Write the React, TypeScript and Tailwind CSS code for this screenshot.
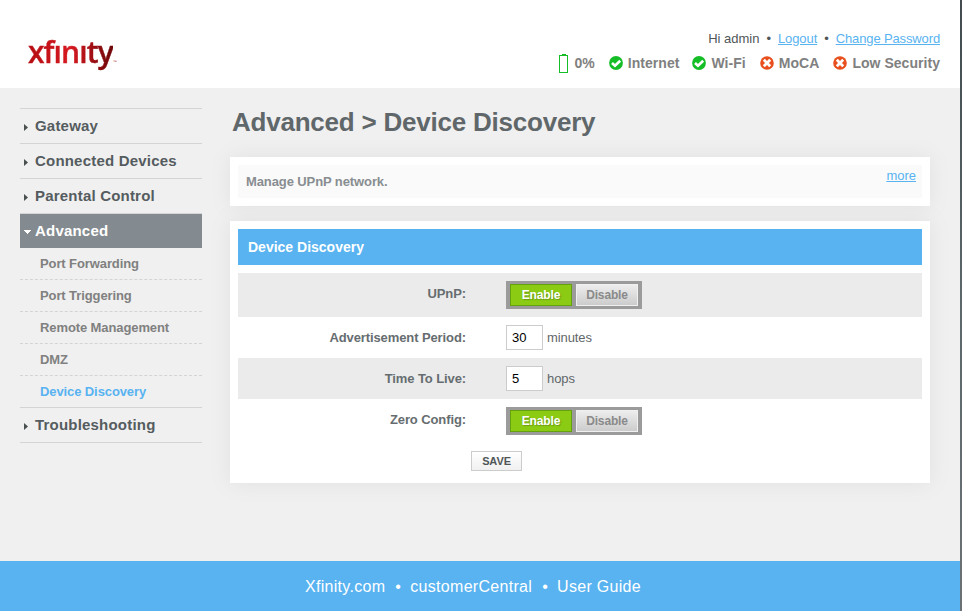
import React from "react";

const sans = "font-['Liberation_Sans',Arial,sans-serif]";

const subItems = [
  { label: "Port Forwarding", cls: "border-dashed text-[#808080]" },
  { label: "Port Triggering", cls: "border-dashed text-[#808080]" },
  { label: "Remote Management", cls: "border-dashed text-[#808080]" },
  { label: "DMZ", cls: "border-dashed text-[#808080]" },
  { label: "Device Discovery", cls: "border-solid text-[#58b3f0]" },
];

function Arrow() {
  return (
    <svg width="4" height="7" viewBox="0 0 4 7" className="mt-[2px] ml-1 shrink-0">
      <path d="M0 0L4 3.5L0 7Z" fill="#4a4f50" />
    </svg>
  );
}

function NavItem({ label }: { label: string }) {
  return (
    <div className="flex h-[35px] items-center border-b border-[#d4d4d4]">
      <Arrow />
      <span className="ml-[7px] text-[15px] leading-[34px] font-bold tracking-[0.2px] text-[#555c5f]">{label}</span>
    </div>
  );
}

function Good() {
  return (
    <svg width="14" height="14" viewBox="0 0 14 14">
      <circle cx="7" cy="7" r="6.9" fill="#15bd27" />
      <path d="M3 7L6 9.8L11.2 4.8" fill="none" stroke="#fff" strokeWidth="2.6" />
    </svg>
  );
}

function Bad() {
  return (
    <svg width="14" height="14" viewBox="0 0 14 14">
      <circle cx="7" cy="7" r="6.8" fill="#e94f1d" />
      <path d="M3.8 3.8L10.2 10.2M10.2 3.8L3.8 10.2" fill="none" stroke="#fff" strokeWidth="2.8" />
    </svg>
  );
}

function Toggle() {
  return (
    <div className="flex h-7 w-[136px] gap-1 bg-[#9b9b9b] p-[3px] pl-1 text-[12px] leading-[20px] font-bold tracking-[-0.15px]">
      <button className="h-[22px] w-[62px] border border-[#66a10f] bg-[#8bcb13] text-white [text-shadow:1px_1px_1px_#6a9a18]">Enable</button>
      <button className="h-[22px] w-[62px] border border-[#f0f0f0] bg-linear-to-b from-[#ededed] to-[#cccccc] text-[#8a8a8a]">Disable</button>
    </div>
  );
}

function Row({ label, cls, children }: { label: string; cls: string; children: React.ReactNode }) {
  return (
    <div className={"flex pt-2 " + cls}>
      <div className="w-[228px] pt-[5px] text-right text-[13px] leading-4 font-bold tracking-[-0.1px] text-[#666d70]">{label}</div>
      <div className="ml-10 flex text-[13px] text-[#5f676a]">{children}</div>
    </div>
  );
}

export default function App() {
  return (
    <div className={"flex h-[611px] w-[962px] overflow-hidden bg-[#f0f0f0] " + sans}>
      <div className="flex w-[960px] flex-col">
        <header className="flex h-[88px] shrink-0 justify-between bg-white">
          <div aria-label="xfinity" className="mt-8 ml-7 flex h-10 items-start">
            <span className="bg-linear-to-r from-[#b50d12] via-[#d71920] to-[#6d0608] bg-clip-text font-['Open_Sans',sans-serif] text-[30px] leading-[40px] font-semibold tracking-[-0.9px] text-transparent [-webkit-text-stroke:0.4px_transparent]">xfınıty</span>
            <span className="mt-[27px] text-[4px] leading-[6px] text-[#a33]">™</span>
          </div>
          <div className="mr-5 flex flex-col items-end">
            <div className="mt-[31px] flex text-[13px] leading-4 text-[#505658]">
              <span>Hi admin</span>
              <span className="mx-[7px]">•</span>
              <a className="tracking-[-0.1px] text-[#58b3f0] underline">Logout</a>
              <span className="mx-[7px]">•</span>
              <a className="tracking-[-0.13px] text-[#58b3f0] underline">Change Password</a>
            </div>
            <div className="mt-[6px] flex h-5 items-center text-[14px] leading-5 font-bold tracking-[0.04px] text-[#808080]">
              <svg width="10" height="20" viewBox="0 0 10 20" shapeRendering="crispEdges">
                <path d="M3 1h4v2H3Z" fill="#15bd27" />
                <rect x="0.5" y="2.5" width="8" height="17" rx="1" fill="none" stroke="#15bd27" />
              </svg>
              <span className="mr-[14px] ml-[5px]">0%</span>
              <Good />
              <span className="mr-[13px] ml-[5px]">Internet</span>
              <Good />
              <span className="mr-[14px] ml-[5px]">Wi-Fi</span>
              <Bad />
              <span className="mr-[14px] ml-[5px]">MoCA</span>
              <Bad />
              <span className="ml-[5px]">Low Security</span>
            </div>
          </div>
        </header>
        <div className="flex h-[473px] shrink-0">
          <nav className="mt-5 ml-5 w-[182px] shrink-0">
            <div className="border-t border-[#d4d4d4]">
              <NavItem label="Gateway" />
              <NavItem label="Connected Devices" />
              <NavItem label="Parental Control" />
            </div>
            <div className="flex h-[34px] items-center bg-[#848b90]">
              <svg width="7" height="4" viewBox="0 0 7 4" className="mt-[2px] ml-1" shapeRendering="crispEdges">
                <path d="M0 0H7L3.5 4Z" fill="#fff" />
              </svg>
              <span className="ml-1 text-[15px] leading-[34px] font-bold tracking-[0.2px] text-white">Advanced</span>
            </div>
            {subItems.map((s) => (
              <div key={s.label} className={"h-8 border-b border-b-[#d4d4d4] pl-5 text-[13px] leading-[31px] font-bold tracking-[-0.1px] " + s.cls}>
                {s.label}
              </div>
            ))}
            <NavItem label="Troubleshooting" />
          </nav>
          <main className="ml-7 w-[700px] shrink-0">
            <h1 className="mt-[17px] ml-[2px] h-[52px] text-[26px] leading-[34px] font-bold tracking-[-0.22px] whitespace-nowrap text-[#5f676a]">Advanced &gt; Device Discovery</h1>
            <section className="h-[49px] bg-white p-2 shadow-[0_0_20px_#e0e0e0]">
              <div className="flex h-[33px] justify-between bg-[#fafafa] pr-[6px] pl-2 text-[13px]">
                <p className="leading-[33px] font-bold tracking-[-0.1px] text-[#888d91]">Manage UPnP network.</p>
                <a className="leading-[22px] text-[#58b3f0] underline">more</a>
              </div>
            </section>
            <section className="mt-[15px] h-[262px] bg-white p-2 shadow-[0_0_20px_#e0e0e0]">
              <h2 className="mb-2 h-9 bg-[#58b3f0] pl-[10px] text-[14px] leading-9 font-bold text-white">Device Discovery</h2>
              <Row label="UPnP:" cls="h-11 bg-[#ebebeb]"><Toggle /></Row>
              <Row label="Advertisement Period:" cls="h-[41px]">
                <input className="h-[25px] w-[37px] border border-[#ccc] bg-white pl-[5px] text-[13px] text-black" defaultValue="30" />
                <span className="ml-1 leading-[25px] tracking-[-0.1px]">minutes</span>
              </Row>
              <Row label="Time To Live:" cls="h-[41px] bg-[#ebebeb]">
                <input className="h-[25px] w-[37px] border border-[#ccc] bg-white pl-[5px] text-[13px] text-black" defaultValue="5" />
                <span className="ml-1 leading-[25px] tracking-[-0.1px]">hops</span>
              </Row>
              <Row label="Zero Config:" cls="h-[52px]"><Toggle /></Row>
              <button className="ml-[233px] block h-5 w-[51px] border border-[#ccc] bg-linear-to-b from-white to-[#f0f0f0] text-[11px] leading-[18px] font-bold tracking-[-0.1px] text-[#505658]">SAVE</button>
            </section>
          </main>
        </div>
        <footer className="flex h-[50px] shrink-0 bg-[#58b3f0] pl-[305px] text-[16px] leading-[52px] tracking-[0.3px] text-white">
          <span>Xfinity.com</span>
          <span className="mr-[9px] ml-[10px]">•</span>
          <span>customerCentral</span>
          <span className="mr-[9px] ml-[10px]">•</span>
          <span>User Guide</span>
        </footer>
      </div>
      <div className="w-[2px] bg-linear-to-b from-[#414b50] via-[#5c686b] to-[#6b7276]" />
    </div>
  );
}
